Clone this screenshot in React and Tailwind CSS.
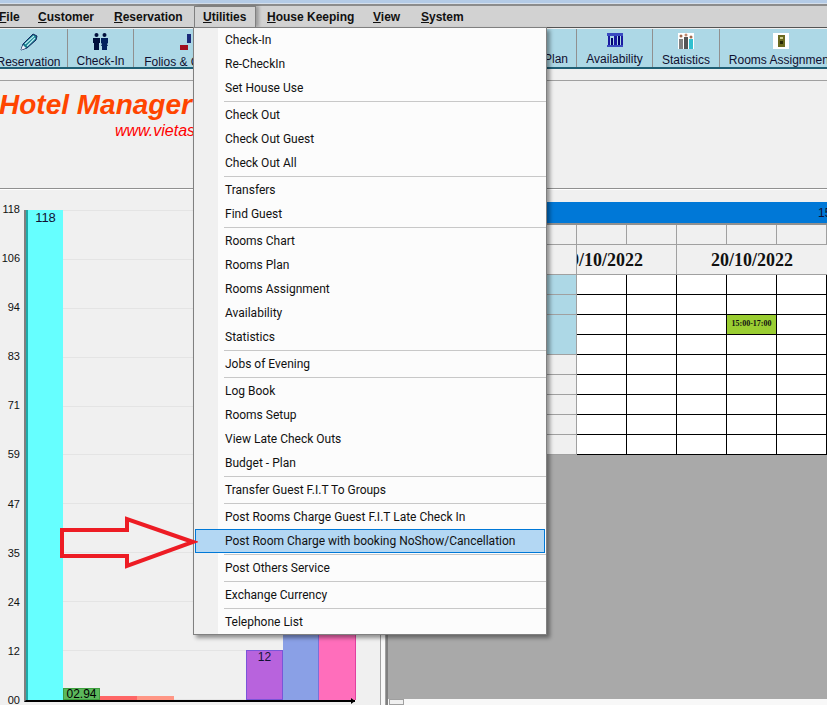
const menuBar = [
  { label: "File", u: "F", cls: "ml-[-1px] w-[39px]" },
  { label: "Customer", u: "C", cls: "w-[76px]" },
  { label: "Reservation", u: "R", cls: "w-[80px]" },
];
const menuBarRight = [
  { label: "House Keeping", cls: "ml-[11px] w-[106px]", u: "H" },
  { label: "View", cls: "w-[48px]", u: "V" },
  { label: "System", cls: "w-[60px]", u: "S" },
];

const PencilIcon = () => (
  <svg width="18" height="18" viewBox="0 0 18 18">
    <path d="M1 17 L3 11 L13 1 L17 3 L16 7 L7 15 Z" fill="#17808f" stroke="#14245e" strokeWidth="1" />
    <path d="M5 11 L14 3 M7 13 L15 5" stroke="#bfeef5" strokeWidth="1.2" />
    <path d="M1 17 L3 12 L6 15 Z" fill="#eef0f8" />
  </svg>
);

const PeopleIcon = () => (
  <svg width="17" height="17" viewBox="0 0 17 17" fill="#00103c">
    <circle cx="4.5" cy="2" r="2" />
    <circle cx="12.5" cy="2" r="2" />
    <path d="M1 5 H8 V10 H7 V17 H2 V10 H1 Z" />
    <path d="M9 5 H16 V10 L15 11 L16 13 H15 V17 H10 V13 H9 L10 11 L9 10 Z" fill="#00205e" />
  </svg>
);

const FoliosIcon = () => (
  <svg width="18" height="18" viewBox="0 0 18 18">
    <path d="M9 1 L13 1 L13 10 L9 10 Z" fill="#1a2a7a" />
    <path d="M2 12 H10 V17 H2 Z" fill="#a01020" />
  </svg>
);

const AvailabilityIcon = () => (
  <svg width="16" height="15" viewBox="0 0 16 15" fill="#1a1aa0">
    <rect x="0" y="0" width="16" height="3" fill="#3a4ac0" />
    <rect x="1" y="3" width="2" height="11" />
    <rect x="4" y="5" width="2" height="9" fill="#000070" />
    <rect x="7" y="3" width="3" height="11" />
    <rect x="11" y="3" width="2" height="11" fill="#000070" />
    <rect x="14" y="3" width="2" height="11" />
    <rect x="0" y="12" width="16" height="2" fill="#3a4ac0" />
  </svg>
);

const StatisticsIcon = () => (
  <svg width="16" height="16" viewBox="0 0 16 16">
    <rect width="16" height="16" fill="#ffffff" />
    <circle cx="3" cy="3" r="1.5" fill="#a06a50" />
    <circle cx="8" cy="2" r="1.5" fill="#c08a70" />
    <circle cx="13" cy="4" r="1.5" fill="#a06a50" />
    <path d="M1 6 H5 V16 H1 Z" fill="#808080" />
    <path d="M6 4 H10 V16 H6 Z" fill="#555555" />
    <path d="M11 6 H15 V16 H11 Z" fill="#30c0d0" />
  </svg>
);

const RoomIcon = () => (
  <svg width="16" height="16" viewBox="0 0 16 16">
    <rect width="16" height="16" fill="#ffffff" />
    <rect x="5" y="2" width="7" height="12" fill="#6a6a20" />
    <rect x="7" y="4" width="3" height="2" fill="#d0d090" />
    <rect x="7" y="8" width="3" height="3" fill="#2a2a08" />
  </svg>
);

const toolbar = [
  { label: "Reservation", w: "w-[68px]", icon: <PencilIcon />, shift: "-ml-[10px]" },
  { label: "Check-In", w: "w-[66px]", icon: <PeopleIcon /> },
  { label: "Folios & Guests", w: "w-[106px]", icon: <FoliosIcon /> },
  { label: "Rooms Chart", w: "w-[120px]", icon: null },
  { label: "Rooms Plan", w: "w-[217px]", icon: null, right: true },
  { label: "Availability", w: "w-[76px]", icon: <AvailabilityIcon /> },
  { label: "Statistics", w: "w-[67px]", icon: <StatisticsIcon /> },
  { label: "Rooms Assignment", w: "w-[122px]", icon: <RoomIcon /> },
];

const menuGroups = [
  ["Check-In", "Re-CheckIn", "Set House Use"],
  ["Check Out", "Check Out Guest", "Check Out All"],
  ["Transfers", "Find Guest"],
  ["Rooms Chart", "Rooms Plan", "Rooms Assignment", "Availability", "Statistics"],
  ["Jobs of Evening"],
  ["Log Book", "Rooms Setup", "View Late Check Outs", "Budget - Plan"],
  ["Transfer Guest F.I.T To Groups"],
  ["Post Rooms Charge Guest F.I.T Late Check In", "Post Room Charge with booking NoShow/Cancellation"],
  ["Post Others Service"],
  ["Exchange Currency"],
  ["Telephone List"],
];

const axis = ["118", "106", "94", "83", "71", "59", "47", "35", "24", "12", "00"];
const rows = [0, 1, 2, 3, 4, 5, 6, 7, 8];

const Underlined = ({ label, u }) => (
  <span>
    <span className="underline">{u}</span>
    {label.slice(u.length)}
  </span>
);

const MenuItem = ({ text }) => {
  const active = text.includes("NoShow");
  return (
    <div
      className={`h-6 flex items-center whitespace-nowrap ${
        active ? "mx-px pl-[29px] bg-[#b3d7f3] border border-[#0078d7]" : "pl-[31px]"
      }`}
    >
      {text}
    </div>
  );
};

const App = () => {
  return (
    <div className="relative w-[827px] h-[705px] overflow-hidden flex flex-col bg-[#f0f0f0] text-black font-['Liberation_Sans',sans-serif] text-xs">
      <div className="h-[4px] bg-[#b4cbe6] border-b border-[#d5dfeb]" />
      <div className="h-[2px] bg-[#8c8c8c]" />

      {/* menu bar */}
      <div className="h-[21px] bg-[#d2d2d2] flex items-center font-bold text-[12px] text-[#111111] border-b border-[#555555] box-content">
        {menuBar.map((m) => (
          <div key={m.label} className={m.cls}>
            <Underlined label={m.label} u={m.u} />
          </div>
        ))}
        <div className="w-[62px] h-[21px] flex items-center pl-[8px] border border-b-0 border-[#808080] shadow-[3px_0_3px_rgba(0,0,0,0.25)]">
          <Underlined label="Utilities" u="U" />
        </div>
        {menuBarRight.map((m) => (
          <div key={m.label} className={m.cls}>
            <Underlined label={m.label} u={m.u} />
          </div>
        ))}
      </div>

      {/* toolbar */}
      <div className="h-[42px] pt-px bg-[#f0f0f0]">
        <div className="h-[40px] bg-[#add8e6] flex border-b-2 border-[#1f5f75] overflow-hidden">
          {toolbar.map((t) => (
            <div
              key={t.label}
              className={`${t.w} shrink-0 h-full flex flex-col border-r border-[#909090] whitespace-nowrap text-[12px] text-[#101030] pt-[4px] ${
                t.right ? "items-end pr-[8px]" : "items-center"
              }`}
            >
              <div className={`h-[20px] flex items-center justify-center ${t.shift || ""}`}>{t.icon}</div>
              <div className={`mt-[3px] ${t.shift || ""}`}>{t.label}</div>
            </div>
          ))}
        </div>
      </div>

      <div className="h-[10px] border-b border-[#a0a0a0] box-content" />

      {/* title */}
      <div className="h-[108px] border-b border-[#909090] pt-[8px]">
        <div className="-ml-px text-[28px] leading-[32px] font-bold italic text-[#ff4500] whitespace-nowrap">Hotel Manager</div>
        <div className="ml-[115px] mt-[1px] text-[16px] leading-[18px] italic text-[#ff0000] whitespace-nowrap">www.vietasoft.com</div>
      </div>
      <div className="h-px bg-white" />

      <div className="flex-1 flex min-h-0">
        {/* chart */}
        <div className="w-[380px] pt-[20px] flex text-[12px]">
          <div className="w-[24px] h-[505px] -mt-[8px] flex flex-col justify-between text-[#111111] shrink-0 pr-[4px] text-right">
            {axis.map((a) => (
              <div key={a} className="leading-[14px] h-[14px] text-[11px]">{a}</div>
            ))}
          </div>
          <div className="relative w-[331px] h-[492px] border-l-2 border-b-2 border-l-[#808080] border-b-black">
            <div className="absolute inset-0 flex flex-col justify-between">
              {axis.map((a) => (
                <div key={a} className="h-px bg-[#e4e4e4]" />
              ))}
            </div>
            <div className="absolute inset-0 flex items-end">
              <div className="w-[37px] h-[490px] bg-[#66ffff] border-l-2 border-[#20a8a8] text-center text-[13px] leading-[15px] text-[#111133] shrink-0">118</div>
              <div className="w-[37px] h-[12px] bg-[#5cb85c] border border-[#3f9f3f] text-center text-[12px] leading-[11px] overflow-hidden shrink-0">02.94</div>
              <div className="w-[37px] h-[4px] bg-[#ff6666] text-center text-[12px] leading-[18px] overflow-hidden shrink-0">1</div>
              <div className="w-[37px] h-[4px] bg-[#ff9685] mr-[72px] text-center text-[12px] leading-[18px] overflow-hidden shrink-0">1</div>
              <div className="w-[37px] h-[50px] bg-[#b863dd] border border-[#7a55d8] text-center text-[12px] leading-[12px] text-[#111133] shrink-0">12</div>
              <div className="w-[36px] h-[120px] bg-[#8aa0e6] border-r border-[#7a70d8] shrink-0" />
              <div className="w-[37px] h-[120px] bg-[#ff6ebb] border-r border-[#e040a0] shrink-0" />
            </div>
            <div className="absolute right-0 -bottom-[4px] w-0 h-0 border-y-[3px] border-y-transparent border-l-[4px] border-l-black" />
          </div>
        </div>

        {/* splitter */}
        <div className="w-[6px] border-x border-[#a0a0a0] bg-[#f8f8f8]" />

        {/* rooms grid */}
        <div className="flex-1 min-w-0 flex flex-col border-l-2 border-[#808080] overflow-hidden">
          <div className="h-[12px] shrink-0" />
          <div className="h-[21px] shrink-0 bg-[#0078d7] flex items-center pl-[430px] whitespace-nowrap text-[12px] text-[#101030]">15</div>
          <div className="h-[2px] shrink-0 bg-[#909090]" />
          <div className="h-[20px] shrink-0 flex border-b border-[#a0a0a0]">
            <div className="w-[189px] shrink-0 border-r border-[#a0a0a0]" />
            {[0, 1, 2, 3, 4].map((c) => (
              <div key={c} className="w-[50px] shrink-0 border-r border-[#a0a0a0]" />
            ))}
          </div>
          <div className="h-[30px] shrink-0 flex border-b border-[#a0a0a0] font-['Liberation_Serif',serif] font-bold text-[18px] text-[#111111]">
            <div className="w-[189px] shrink-0 border-r border-[#a0a0a0]" />
            <div className="w-[100px] shrink-0 flex justify-end items-center pr-[33px] border-r border-[#a0a0a0] overflow-hidden whitespace-nowrap">19/10/2022</div>
            <div className="w-[150px] shrink-0 flex justify-center items-center whitespace-nowrap">20/10/2022</div>
          </div>
          {rows.map((r) => (
            <div key={r} className="h-[20px] shrink-0 flex">
              <div
                className={`w-[189px] shrink-0 border-r border-[#a0a0a0] ${r < 4 ? "bg-[#add8e6]" : "bg-[#f0f0f0]"} ${
                  r === 2 ? "" : "border-b border-b-[#a0a0a0]"
                }`}
              />
              {[0, 1, 2, 3, 4].map((c) => (
                <div
                  key={c}
                  className={`w-[50px] shrink-0 border-r border-b border-black flex items-center justify-center ${
                    r === 2 && c === 3 ? "bg-[#9acd32]" : "bg-white"
                  } font-['Liberation_Serif',serif] font-bold text-[8px] text-[#111111] whitespace-nowrap`}
                >
                  {r === 2 && c === 3 ? "15:00-17:00" : ""}
                </div>
              ))}
            </div>
          ))}
          <div className="flex-1 bg-[#a9a9a9]" />
          <div className="h-[6px] shrink-0 flex bg-[#f8f8f8]">
            <div className="w-[15px] ml-[1px] border border-[#a0a0a0] bg-[#f0f0f0]" />
          </div>
        </div>
      </div>

      {/* open utilities menu */}
      <div className="absolute left-[193px] top-[27px] w-[354px] h-[608px] bg-[#fcfcfc] border border-[#808080] shadow-[3px_3px_4px_rgba(0,0,0,0.4)] font-['Roboto',sans-serif] text-[12px] text-[#111111]">
        <div className="absolute left-0 top-0 bottom-0 w-[24px] bg-[#f0f0f0]" />
        <div className="relative flex flex-col">
          {menuGroups.map((group, i) => (
            <div key={group[0]}>
              {i > 0 && <div className="h-[3px] ml-[30px] flex items-center"><div className="h-px w-full bg-[#c8c8c8]" /></div>}
              {group.map((text) => (
                <MenuItem key={text} text={text} />
              ))}
            </div>
          ))}
        </div>
      </div>

      {/* red arrow annotation */}
      <svg className="absolute left-[58px] top-[514px]" width="140" height="58" viewBox="0 0 140 58">
        <path d="M4 16 H69 V5 L135 28 L69 52 V42 H4 Z" fill="none" stroke="#ed1c24" strokeWidth="4" />
      </svg>
    </div>
  );
};

export default App;
